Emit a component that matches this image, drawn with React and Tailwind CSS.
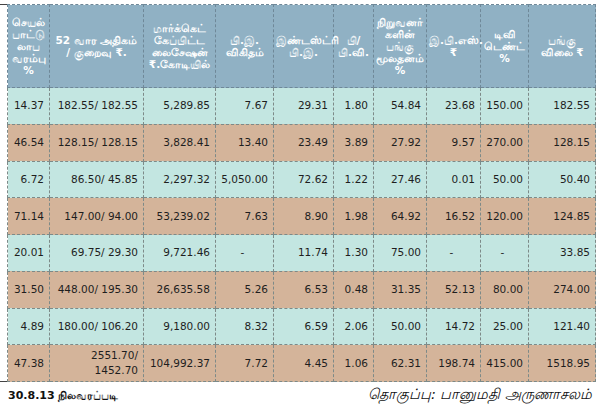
const headers = [
  ['செயல்', 'பாட்டு', 'லாப', 'வரம்பு', '%'],
  ['52 வார அதிகம்', '/ குறைவு ₹.'],
  ['மார்க்கெட்', 'கேப்பிட்ட', 'லைசேஷன்', '₹.கோடியில்'],
  ['பி.இ.', 'விகிதம்'],
  ['இண்டஸ்ட்ரி', 'பி.இ.'],
  ['பி/', 'பி.வி.'],
  ['நிறுவனர்', 'களின்', 'பங்கு', 'மூலதனம்', '%'],
  ['இ.பி.எஸ்.', '₹'],
  ['டிவி', 'டெண்ட்', '%'],
  ['பங்கு', 'விலை ₹'],
];

const widths = [42, 94, 72, 58, 60, 40, 53, 54, 48, 67];

const rows = [
  ['14.37', '182.55/ 182.55', '5,289.85', '7.67', '29.31', '1.80', '54.84', '23.68', '150.00', '182.55'],
  ['46.54', '128.15/ 128.15', '3,828.41', '13.40', '23.49', '3.89', '27.92', '9.57', '270.00', '128.15'],
  ['6.72', '86.50/ 45.85', '2,297.32', '5,050.00', '72.62', '1.22', '27.46', '0.01', '50.00', '50.40'],
  ['71.14', '147.00/ 94.00', '53,239.02', '7.63', '8.90', '1.98', '64.92', '16.52', '120.00', '124.85'],
  ['20.01', '69.75/ 29.30', '9,721.46', '-', '11.74', '1.30', '75.00', '-', '-', '33.85'],
  ['31.50', '448.00/ 195.30', '26,635.58', '5.26', '6.53', '0.48', '31.35', '52.13', '80.00', '274.00'],
  ['4.89', '180.00/ 106.20', '9,180.00', '8.32', '6.59', '2.06', '50.00', '14.72', '25.00', '121.40'],
  ['47.38', '2551.70/\n1452.70', '104,992.37', '7.72', '4.45', '1.06', '62.31', '198.74', '415.00', '1518.95'],
];

export default function App() {
  return (
    <div className="w-[600px] h-[406px] overflow-hidden bg-white [font-family:'DejaVu_Sans',sans-serif]">
      <div className="flex pt-[4px]">
        {/* left frame stub */}
        <div className="w-[7px] border-t border-b border-[#444]" />
        <table className="table-fixed border-collapse w-[588px]">
          <colgroup>
            {widths.map((w, i) => (
              <col key={i} style={{ width: w }} />
            ))}
          </colgroup>
          <thead>
            <tr className="h-[83px] bg-[#90b1c4]">
              {headers.map((lines, i) => (
                <th
                  key={i}
                  className="border border-dashed border-[#6f8898] px-[2px] text-center align-middle text-[10.5px] leading-[12px] font-semibold text-white"
                >
                  {lines.map((l, j) => (
                    <div key={j}>{l}</div>
                  ))}
                </th>
              ))}
            </tr>
          </thead>
          <tbody>
            {rows.map((r, i) => (
              <tr key={i} className={`h-[36.75px] ${i % 2 === 0 ? 'bg-[#c3e6e1]' : 'bg-[#d4b49a]'}`}>
                {r.map((c, j) => (
                  <td
                    key={j}
                    className={`border border-dashed border-[#7d8a88] pr-[5px] pl-[1px] text-[10.5px] leading-[15px] text-[#1e1e1e] whitespace-pre align-middle ${c === '-' ? 'text-center pr-0' : 'text-right'}`}
                  >
                    {c}
                  </td>
                ))}
              </tr>
            ))}
          </tbody>
        </table>
      </div>
      <div className="flex justify-between items-baseline pl-[8px] pr-[8px] pt-[2px]">
        <span className="text-[11px] font-semibold text-[#111]">30.8.13 நிலவரப்படி</span>
        <span className="text-[14.5px] italic text-[#111]">தொகுப்பு: பானுமதி அருணாசலம்</span>
      </div>
    </div>
  );
}
